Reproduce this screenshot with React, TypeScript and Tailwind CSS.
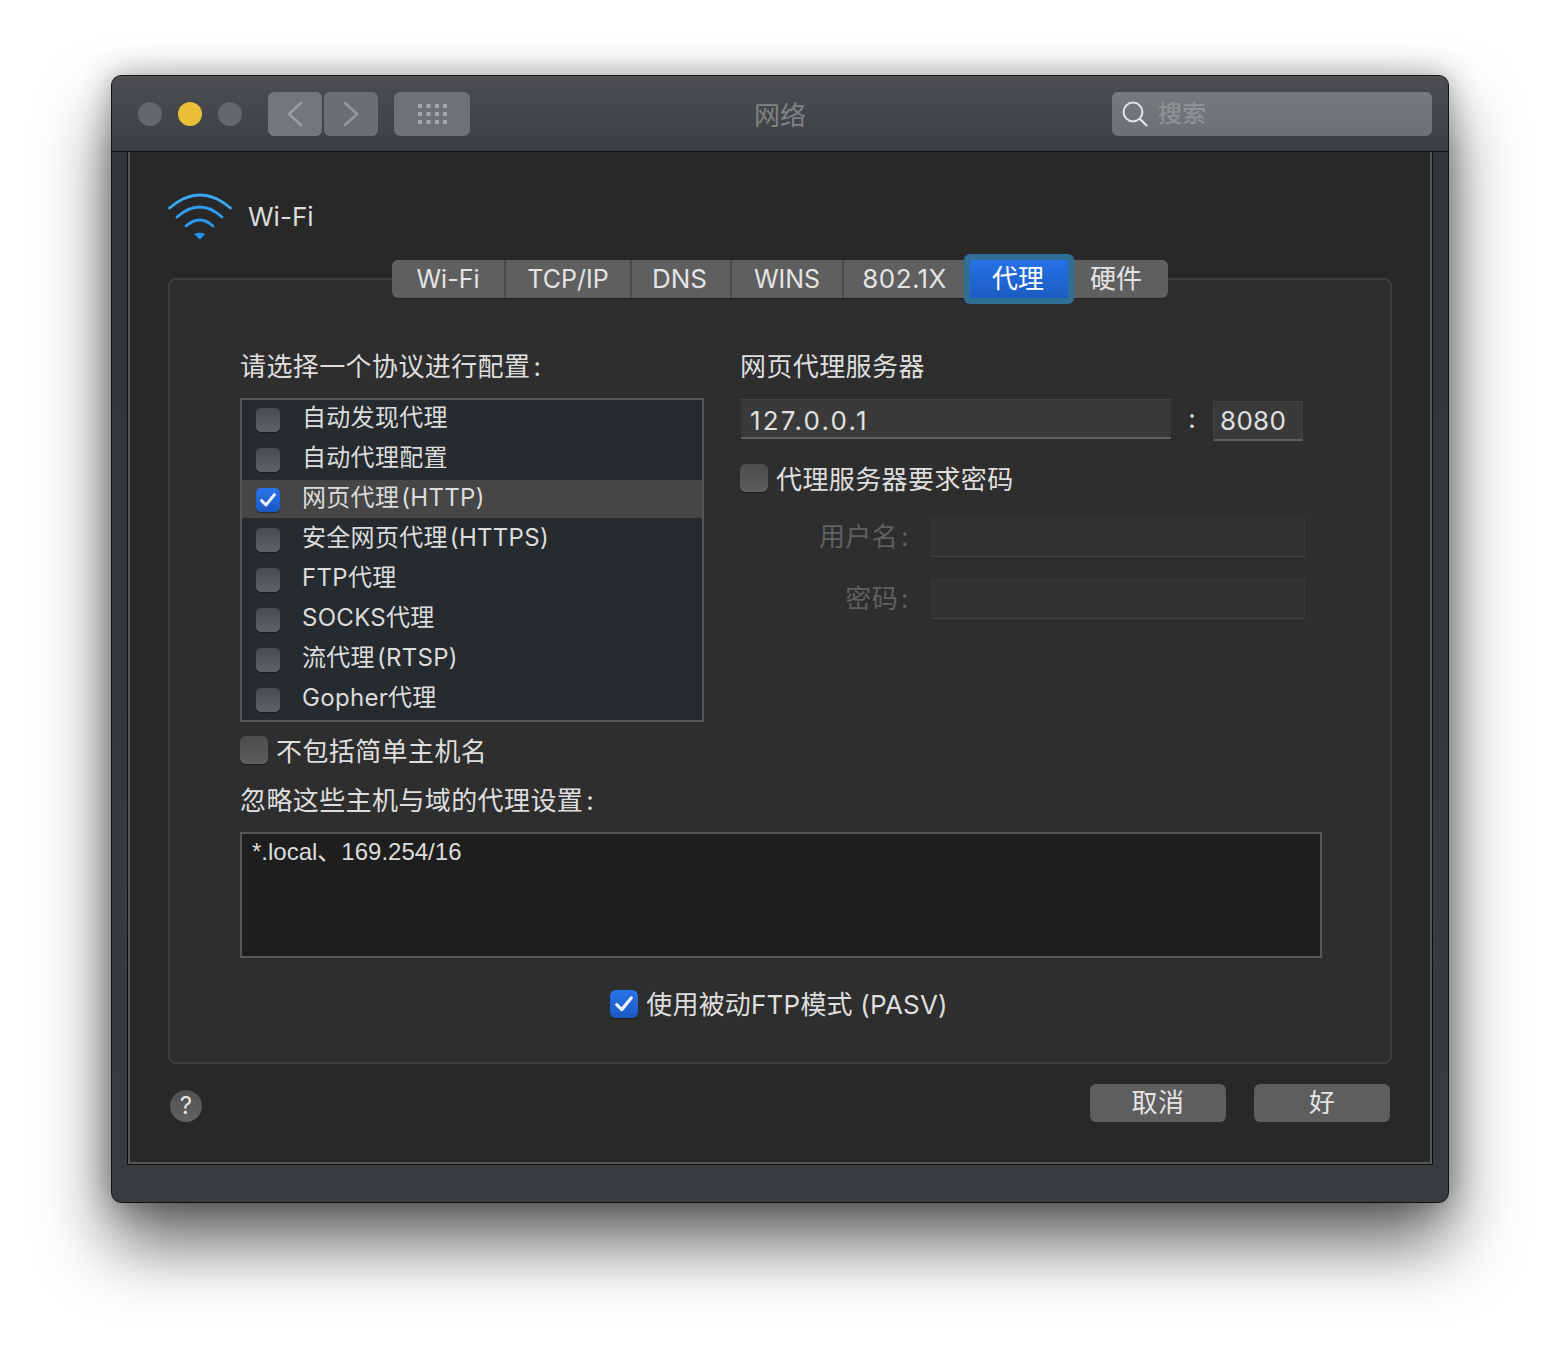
import React from "react";

function Check({ size = 16 }: { size?: number }) {
  return (
    <svg width={size} height={size} viewBox="0 0 16 16" fill="none">
      <path d="M1.6 8.6 L6 13 L14.4 2.6" stroke="#eef2fd" strokeWidth="2.9" strokeLinecap="round" strokeLinejoin="round" />
    </svg>
  );
}

function SmallBox({ on }: { on?: boolean }) {
  return on ? (
    <span className="w-6 h-6 mt-[2px] shrink-0 rounded-[5px] bg-gradient-to-b from-[#2b74ea] to-[#1a58c2] shadow-[0_1px_1px_rgba(0,0,0,0.4)] flex items-center justify-center">
      <Check />
    </span>
  ) : (
    <span className="w-6 h-6 shrink-0 rounded-[5px] bg-gradient-to-b from-[#484b4e] to-[#5f6265] shadow-[0_1px_1px_rgba(0,0,0,0.4)]" />
  );
}

function BigBox({ on }: { on?: boolean }) {
  return on ? (
    <span className="w-7 h-7 shrink-0 rounded-[6px] bg-gradient-to-b from-[#2b74ea] to-[#1a58c2] shadow-[0_1px_1px_rgba(0,0,0,0.4)] flex items-center justify-center">
      <Check size={18} />
    </span>
  ) : (
    <span className="w-7 h-7 shrink-0 rounded-[6px] bg-gradient-to-b from-[#4c4c4c] to-[#5e5e5e] shadow-[0_1px_1px_rgba(0,0,0,0.4)]" />
  );
}

const rows = [
  { t: "自动发现代理" },
  { t: "自动代理配置" },
  { t: "网页代理 (HTTP)", on: true },
  { t: "安全网页代理 (HTTPS)" },
  { t: "FTP代理" },
  { t: "SOCKS代理" },
  { t: "流代理 (RTSP)" },
  { t: "Gopher代理" },
];

const tabs = [
  { t: "Wi-Fi", w: "w-[114px] text-[25px]" },
  { t: "TCP/IP", w: "w-[126px] text-[25px]" },
  { t: "DNS", w: "w-[100px] pr-[3px]" },
  { t: "WINS", w: "w-[112px] text-[25px]" },
  { t: "802.1X", w: "w-[121px] tracking-[0.4px]" },
];

export default function App() {
  return (
    <div className="w-[1560px] h-[1350px] bg-white overflow-hidden pt-[75px] pl-[111px] font-['Inter','Noto_Sans_CJK_SC',sans-serif] text-[#dedede]">
      <div className="w-[1338px] h-[1128px] rounded-[10px] border border-[#111] flex flex-col bg-gradient-to-b from-[#30343a] to-[#383b40] shadow-[0_40px_70px_rgba(0,0,0,0.62),0_0_30px_rgba(0,0,0,0.32)]">
        {/* title bar */}
        <div className="h-[76px] shrink-0 rounded-t-[9px] border-b border-[#111] border-t border-t-[#565859] bg-gradient-to-b from-[#4b4d51] to-[#3c3f44] flex items-center pl-[26px] pr-[16px]">
          <span className="w-6 h-6 rounded-full bg-[#65686b]" />
          <span className="w-6 h-6 rounded-full bg-[#e9bf38] ml-4" />
          <span className="w-6 h-6 rounded-full bg-[#65686b] ml-4" />
          <div className="ml-[26px] w-[54px] h-11 rounded-[6px] bg-[#73767b] flex items-center justify-center">
            <svg width="18" height="28" viewBox="0 0 18 28" fill="none">
              <path d="M15 3 L3 14 L15 25" stroke="#9a9ca0" strokeWidth="2.6" strokeLinecap="round" strokeLinejoin="round" />
            </svg>
          </div>
          <div className="ml-[2px] w-[54px] h-11 rounded-[6px] bg-[#6b6e73] flex items-center justify-center">
            <svg width="18" height="28" viewBox="0 0 18 28" fill="none">
              <path d="M3 3 L15 14 L3 25" stroke="#94969a" strokeWidth="2.6" strokeLinecap="round" strokeLinejoin="round" />
            </svg>
          </div>
          <div className="ml-4 w-[76px] h-11 rounded-[6px] bg-[#6e7176] flex items-center justify-center">
            <svg width="30" height="22" viewBox="0 0 30 22" fill="#a2a4a7">
              {[1, 9.5, 18, 26].map((x) =>
                [1, 9, 17].map((y) => <rect key={x + "-" + y} x={x} y={y} width="4" height="4" />)
              )}
            </svg>
          </div>
          <div className="flex-1 text-center text-[26px] leading-9 text-[#808285] pr-[22px] pt-1">网络</div>
          <div className="w-80 h-11 rounded-[6px] bg-gradient-to-b from-[#76797d] to-[#6c6f73] flex items-center pl-[10px]">
            <svg width="26" height="28" viewBox="0 0 26 28" fill="none">
              <circle cx="11" cy="12" r="9.4" stroke="#e6e7e8" strokeWidth="2" />
              <path d="M17.8 18.8 L25 26" stroke="#e6e7e8" strokeWidth="2.2" />
            </svg>
            <span className="ml-[10px] text-[24px] leading-8 font-medium text-[#8f9194]">搜索</span>
          </div>
        </div>

        {/* body */}
        <div className="mx-[15px] h-[1013px] shrink-0 border-x border-b border-[#0f0f0f]">
          <div className="h-full border-x-2 border-b-2 border-[#565656] bg-[#282828] px-[38px] pt-[41px]">
            <div className="flex items-center h-12 gap-4">
              <svg width="64" height="48" viewBox="0 0 64 48" fill="none">
                <path d="M1.5 15 Q32 -11 62.5 15" stroke="#38a8f6" strokeWidth="2.8" strokeLinecap="round" />
                <path d="M9 24 Q32 4 54 24" stroke="#2f9ff6" strokeWidth="2.8" strokeLinecap="round" />
                <path d="M18 33 Q32 21 45 33" stroke="#2b9af6" strokeWidth="2.8" strokeLinecap="round" />
                <path d="M26 41 Q32 38.5 37 41 L32 46.5 Z" fill="#2294f5" />
              </svg>
              <span className="text-[26px] leading-9 text-[#dcdcdc]">Wi-Fi</span>
            </div>

            {/* tabs */}
            <div className="relative z-10 mt-[19px] -mb-5 flex justify-center">
              <div className="h-[38px] rounded-[6px] bg-[#5f5f5f] flex text-[26px] leading-9 text-[#e4e4e4] shadow-[0_1px_0_rgba(0,0,0,0.3)]">
                {tabs.map((x, i) => (
                  <div
                    key={x.t}
                    className={
                      "h-full flex items-center justify-center " +
                      (i < 4 ? "border-r-2 border-[#4b4b4b] " : "") +
                      x.w
                    }
                  >
                    {x.t}
                  </div>
                ))}
                <div className="-my-[6px] w-[110px] rounded-[6px] bg-[#2f6f95] p-[6px] -ml-[1px] -mr-[1px]">
                  <div className="h-full bg-gradient-to-b from-[#2571e6] to-[#1b5cc2] flex items-center justify-center text-white pr-[2px]">代理</div>
                </div>
                <div className="h-full w-[95px] flex items-center justify-center pr-[9px]">硬件</div>
              </div>
            </div>

            {/* box */}
            <div className="h-[786px] rounded-[8px] border-2 border-[#3e3e3e] bg-[#2e2e2e] pl-[70px] pr-[68px] pt-[69px]">
              <div className="flex gap-9">
                <div className="w-[464px] shrink-0">
                  <div className="text-[26px] leading-9 tracking-[0.4px]">
                    请选择一个协议进行配置<span className="ml-[3px]">:</span>
                  </div>
                  <div className="mt-[13px] h-[324px] border-2 border-[#565656] bg-[#262b30]">
                    {rows.map((r) => (
                      <div key={r.t} className={"flex items-center pl-[14px] " + (r.on ? "h-[38px] mb-[2px] bg-[#464646]" : "h-10")}>
                        <SmallBox on={r.on} />
                        <span className={"ml-[22px] text-[24px] leading-8 tracking-[0.3px] [word-spacing:-5px] text-[#dcdcdc] " + (r.on ? "pb-[2px]" : "pb-1")}>{r.t}</span>
                      </div>
                    ))}
                  </div>
                  <div className="mt-[14px] h-7 flex items-center gap-2">
                    <BigBox />
                    <span className="text-[26px] leading-9 tracking-[0.4px] pt-1">不包括简单主机名</span>
                  </div>
                </div>

                <div className="flex-1">
                  <div className="text-[26px] leading-9 tracking-[0.4px]">网页代理服务器</div>
                  <div className="mt-[14px] flex items-start">
                    <div className="ml-px w-[430px] h-10 bg-[#3a3a3a] border-t border-[#414141] border-b-2 border-b-[#5e5e5e] pl-[9px] pt-1 flex items-center text-[26px] leading-9 tracking-[2.2px] text-[#e0e0e0]">
                      127.0.0.1
                    </div>
                    <div className="w-[42px] h-10 text-center text-[26px] leading-9 text-[#dedede] pt-[2px]">:</div>
                    <div className="mt-[2px] w-[90px] h-10 bg-[#3a3a3a] border-x border-t border-[#414141] border-b-2 border-b-[#5e5e5e] pl-[6px] flex items-center text-[26px] leading-9 tracking-[0.3px] text-[#e0e0e0]">
                      8080
                    </div>
                  </div>
                  <div className="mt-[23px] h-7 flex items-center gap-2">
                    <BigBox />
                    <span className="text-[26px] leading-9 tracking-[0.4px] pt-1">代理服务器要求密码</span>
                  </div>
                  <div className="mt-[25px] flex items-center h-10">
                    <span className="w-[169px] text-right text-[26px] leading-9 tracking-[0.4px] text-[#606060]">
                      用户名<span className="ml-[3px]">:</span>
                    </span>
                    <div className="ml-[22px] w-[374px] h-10 bg-[#323232] border-x border-t border-[#363636] border-b border-b-[#444]" />
                  </div>
                  <div className="mt-[22px] flex items-center h-10">
                    <span className="w-[169px] text-right text-[26px] leading-9 tracking-[0.4px] text-[#606060]">
                      密码<span className="ml-[3px]">:</span>
                    </span>
                    <div className="ml-[22px] w-[374px] h-10 bg-[#323232] border-x border-t border-[#363636] border-b border-b-[#444]" />
                  </div>
                </div>
              </div>

              <div className="mt-[18px] text-[26px] leading-9 tracking-[0.4px] pt-px -mb-px">
                忽略这些主机与域的代理设置<span className="ml-[3px]">:</span>
              </div>
              <div className="mt-[14px] h-[126px] border-2 border-[#565656] bg-[#1e1e1e] pl-[10px] pt-[2px] text-[24px] leading-8 font-['Liberation_Sans','Noto_Sans_CJK_SC',sans-serif] text-[#dcdcdc]">
                *.local、169.254/16
              </div>
              <div className="mt-8 h-7 flex items-center justify-center gap-2 pr-1">
                <BigBox on />
                <span className="text-[26px] leading-9 tracking-[0.2px] pt-[2px]">使用被动FTP模式 (PASV)</span>
              </div>
            </div>

            {/* footer */}
            <div className="mt-5 flex items-start">
              <div className="ml-[2px] mt-[6px] w-8 h-8 rounded-full bg-gradient-to-b from-[#505050] to-[#626262] flex items-center justify-center text-[24px] leading-8 text-[#e2e2e2]">?</div>
              <div className="ml-auto mr-[2px] flex gap-7">
                <div className="w-[136px] h-[38px] rounded-[6px] bg-[#5e5e5e] flex items-center justify-center text-[26px] leading-9 tracking-[0.4px] text-[#e4e4e4]">取消</div>
                <div className="w-[136px] h-[38px] rounded-[6px] bg-[#5e5e5e] flex items-center justify-center text-[26px] leading-9 text-[#e4e4e4]">好</div>
              </div>
            </div>
          </div>
        </div>
      </div>
    </div>
  );
}
